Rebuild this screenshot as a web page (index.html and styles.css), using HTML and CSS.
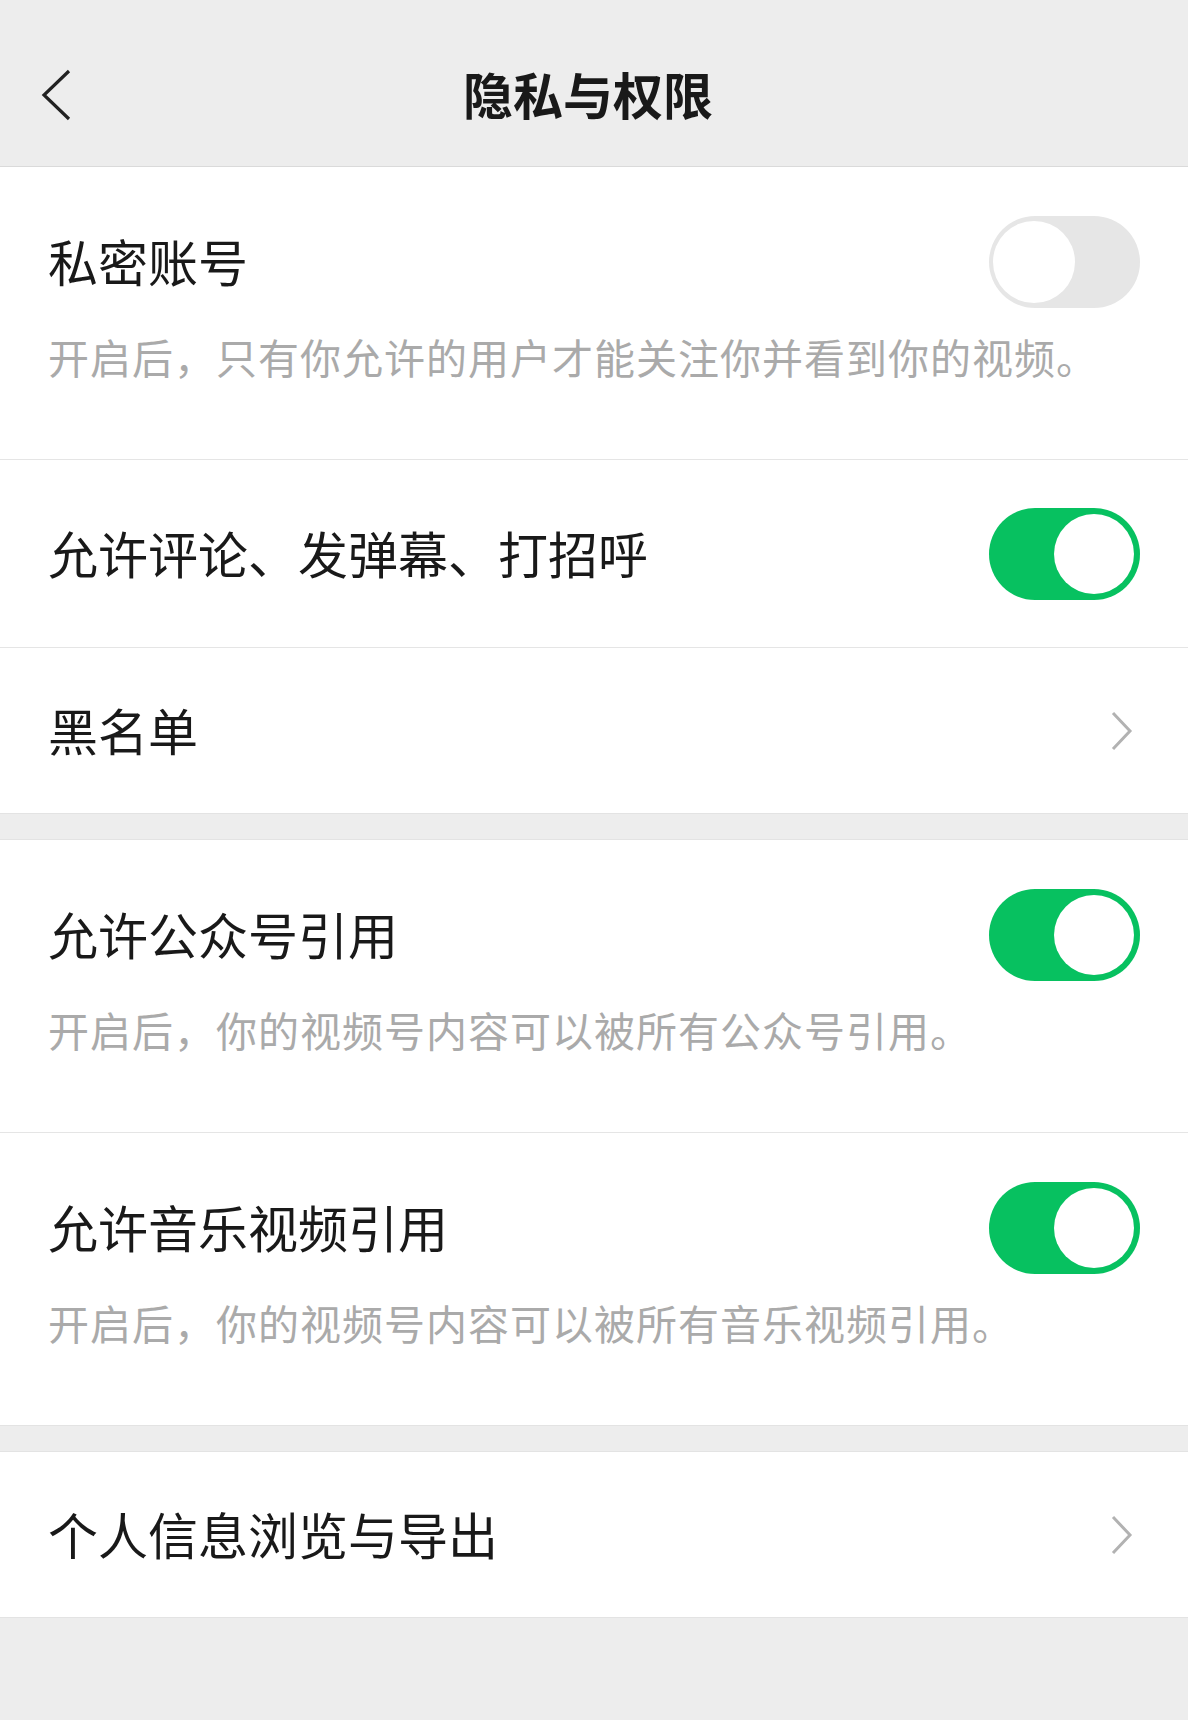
FILE: index.html
```html
<!DOCTYPE html>
<html lang="zh-CN">
<head>
    <meta charset="UTF-8">
    <title>隐私与权限</title>
    <link rel="stylesheet" href="styles.css">
</head>
<body>
<div class="page">
    <div class="nav">
        <span class="nav_back">
            <svg width="32" height="52" viewBox="0 0 32 52"><path d="M29 2 L4 26 L29 50" fill="none" stroke="#222" stroke-width="3.2" stroke-linejoin="miter"/></svg>
        </span>
        <h1 class="nav_title">隐私与权限</h1>
    </div>

    <div class="group">
        <div class="cell cell_desc">
            <div class="cell_head">
                <span class="cell_title">私密账号</span>
                <span class="switch"></span>
            </div>
            <p class="cell_note">开启后，只有你允许的用户才能关注你并看到你的视频。</p>
        </div>
        <div class="cell cell_mid">
            <div class="cell_head">
                <span class="cell_title">允许评论、发弹幕、打招呼</span>
                <span class="switch switch_on"></span>
            </div>
        </div>
        <div class="cell cell_last">
            <div class="cell_head">
                <span class="cell_title">黑名单</span>
                <span class="arrow">
                    <svg width="24" height="40" viewBox="0 0 24 40"><path d="M3 2 L20 20 L3 38" fill="none" stroke="#b2b2b2" stroke-width="3"/></svg>
                </span>
            </div>
        </div>
    </div>

    <div class="group">
        <div class="cell cell_desc">
            <div class="cell_head">
                <span class="cell_title">允许公众号引用</span>
                <span class="switch switch_on"></span>
            </div>
            <p class="cell_note">开启后，你的视频号内容可以被所有公众号引用。</p>
        </div>
        <div class="cell cell_desc cell_end">
            <div class="cell_head">
                <span class="cell_title">允许音乐视频引用</span>
                <span class="switch switch_on"></span>
            </div>
            <p class="cell_note">开启后，你的视频号内容可以被所有音乐视频引用。</p>
        </div>
    </div>

    <div class="group">
        <div class="cell cell_last">
            <div class="cell_head">
                <span class="cell_title">个人信息浏览与导出</span>
                <span class="arrow">
                    <svg width="24" height="40" viewBox="0 0 24 40"><path d="M3 2 L20 20 L3 38" fill="none" stroke="#b2b2b2" stroke-width="3"/></svg>
                </span>
            </div>
        </div>
    </div>
</div>
</body>
</html>
```

FILE: styles.css
```css
* {
    margin: 0;
    padding: 0;
    box-sizing: border-box;
}

body {
    background-color: #ededed;
    font-family: "Noto Sans CJK SC", "Noto Sans", sans-serif;
    color: #191919;
}

.page {
    width: 1188px;
    min-height: 1720px;
    background-color: #ededed;
}

/* 顶部导航 */
.nav {
    height: 167px;
    border-bottom: 1px solid #dadada;
    display: flex;
    align-items: center;
    justify-content: center;
    position: relative;
}

.nav_back {
    position: absolute;
    left: 40px;
    top: 69px;
    display: flex;
}

.nav_title {
    font-size: 50px;
    font-weight: 700;
    line-height: 66px;
    margin-top: 19px;
    margin-right: 12px;
}

/* 分组 */
.group {
    background-color: #fff;
    margin-bottom: 25px;
    border-bottom: 1px solid #e3e3e3;
}

.group + .group {
    border-top: 1px solid #e3e3e3;
}

.cell {
    padding-left: 48px;
}

.cell_head {
    height: 92px;
    display: flex;
    align-items: center;
    justify-content: space-between;
    padding-right: 48px;
}

.cell_title {
    font-size: 50px;
    line-height: 66px;
    padding-bottom: 5px;
}

.cell_desc {
    padding-top: 49px;
    padding-bottom: 73px;
    border-bottom: 1px solid #e5e5e5;
}

.cell_end {
    border-bottom: none;
}

.cell_mid {
    padding-top: 48px;
    padding-bottom: 47px;
    border-bottom: 1px solid #e5e5e5;
}

.cell_last {
    padding-top: 37px;
    padding-bottom: 36px;
}

.cell_note {
    margin-top: 18px;
    font-size: 41px;
    line-height: 60px;
    letter-spacing: 1px;
    color: #aaaaaa;
    white-space: nowrap;
}

/* 开关 */
.switch {
    width: 151px;
    height: 92px;
    border-radius: 46px;
    background-color: #e6e6e6;
    position: relative;
    flex-shrink: 0;
}

.switch::after {
    content: "";
    position: absolute;
    left: 4px;
    top: 5px;
    width: 82px;
    height: 82px;
    border-radius: 50%;
    background-color: #fff;
}

.switch_on {
    background-color: #07c160;
}

.switch_on::after {
    left: auto;
    right: 6px;
    top: 6px;
    width: 80px;
    height: 80px;
}

.arrow {
    display: flex;
    margin-right: 6px;
}
```
